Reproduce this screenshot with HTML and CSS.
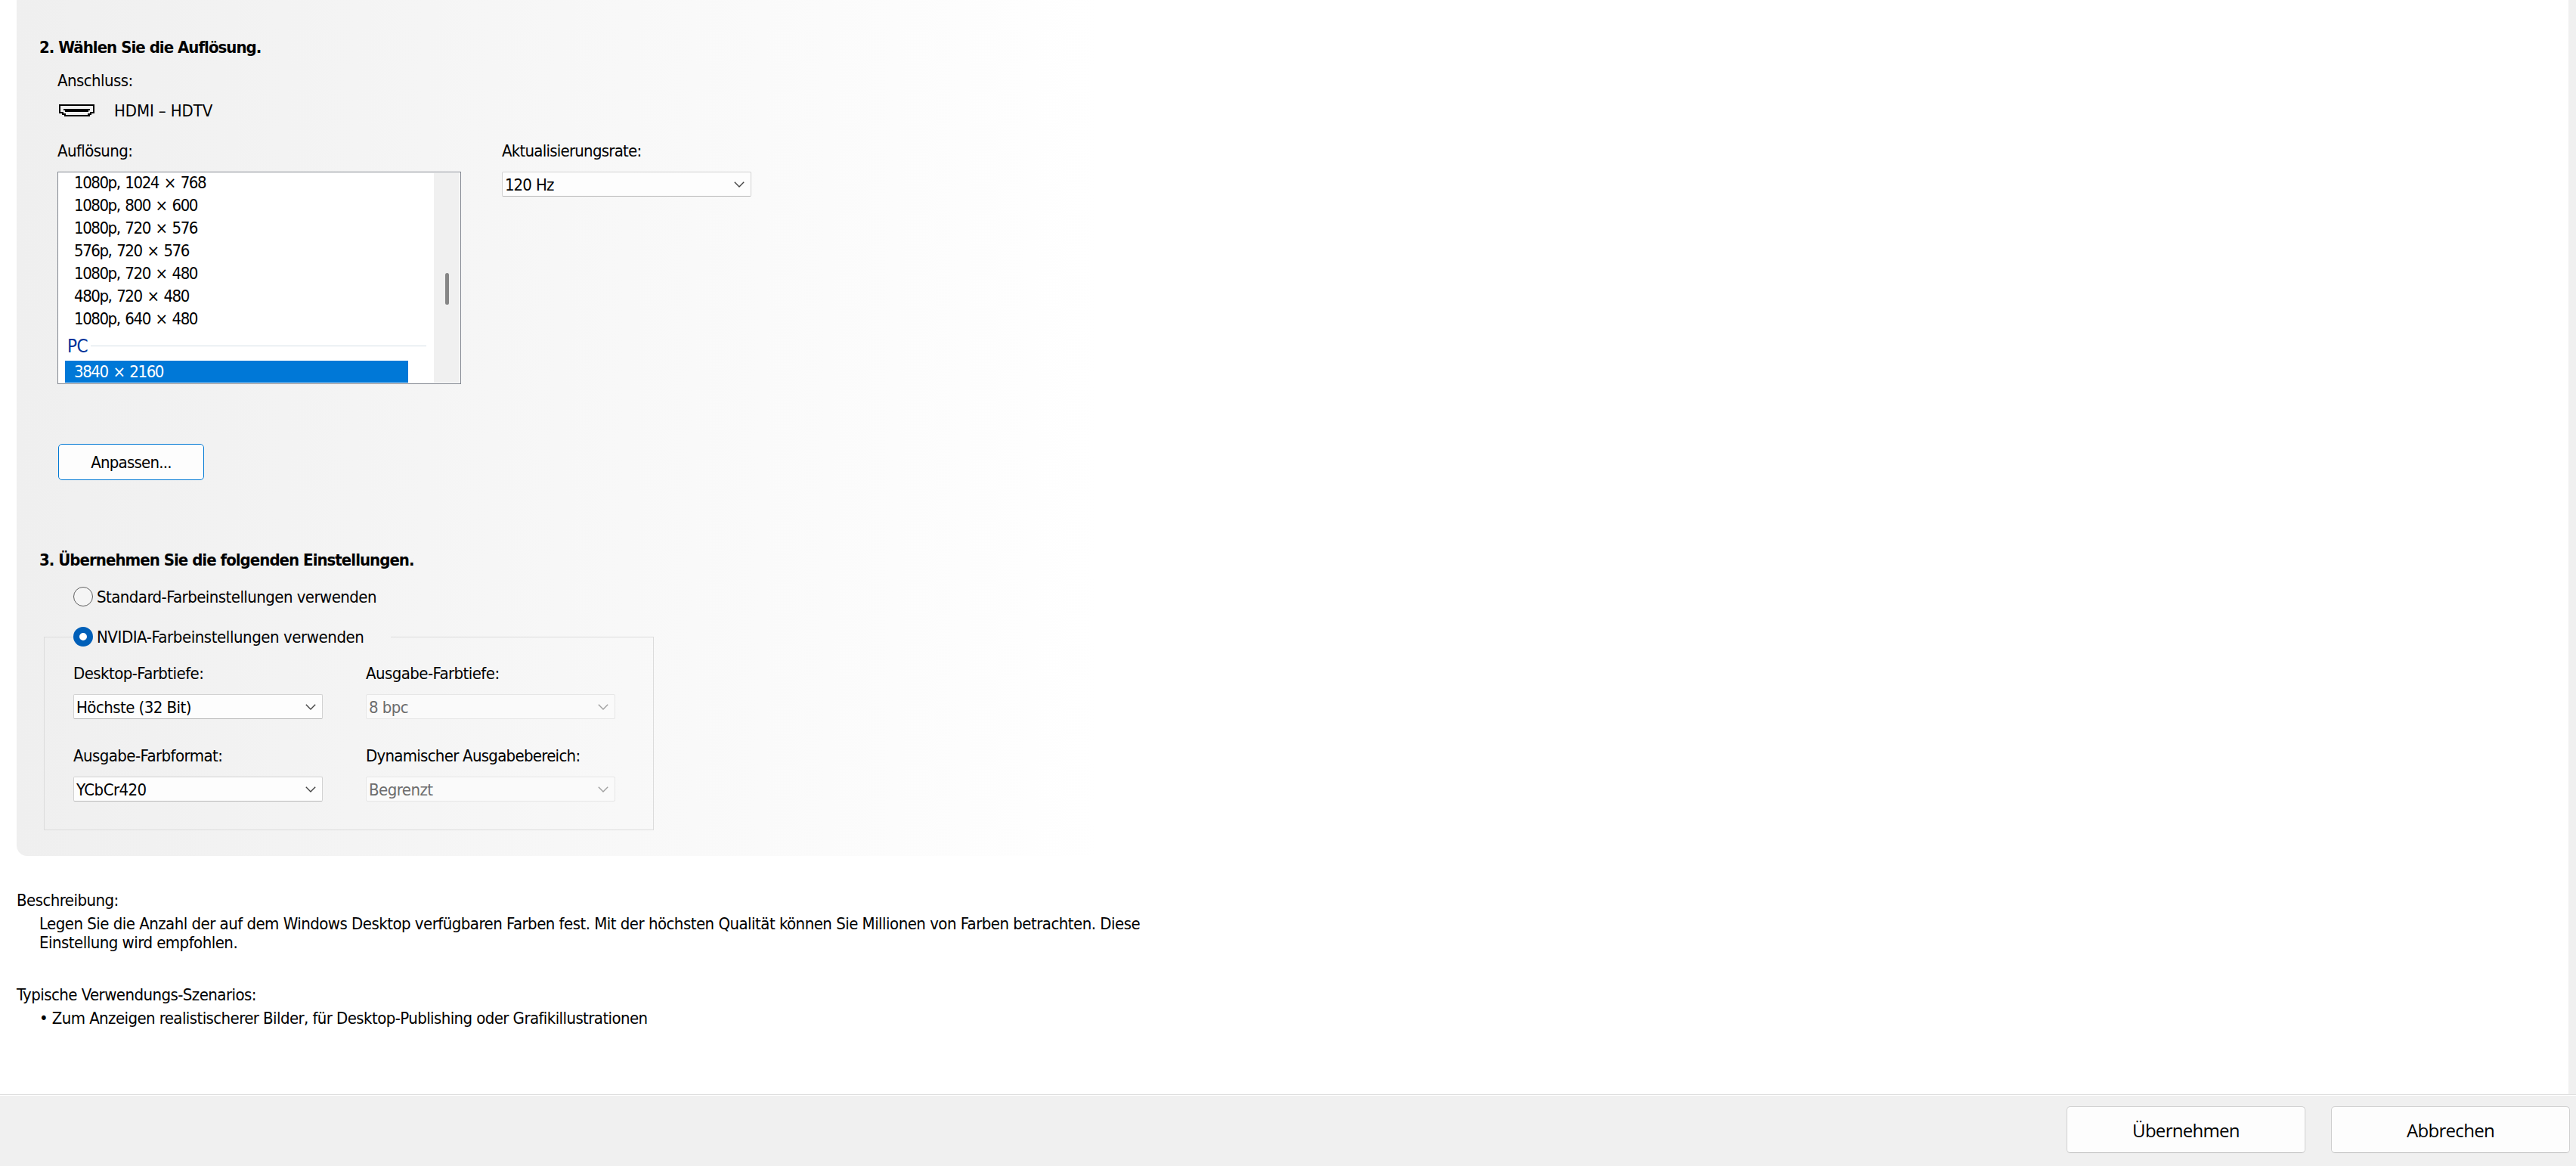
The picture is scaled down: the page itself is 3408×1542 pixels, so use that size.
FILE: index.html
```
<!DOCTYPE html>
<html lang="de">
<head>
    <meta charset="UTF-8">
    <meta name="viewport" content="width=device-width, initial-scale=1.0">
    <title>Auflösung ändern</title>
    <link rel="stylesheet" href="styles.css">
</head>
<body>

    <main class="content">
        <section class="panel">
            <h2 class="step">2. Wählen Sie die Auflösung.</h2>

            <div class="connector">
                <p>Anschluss:</p>
                <div class="connector-row">
                    <svg class="hdmi-icon" width="47" height="16" viewBox="0 0 47 16" shape-rendering="crispEdges">
                        <path d="M0 0h47v12h-4v2h-2v2H7v-2H4v-2H0zM2 2v8h4v2h3v2h29v-2h3v-2h4V2z" fill="#000" fill-rule="evenodd"/>
                        <path d="M6 6h35v2h-2v2H8V8H6z" fill="#000"/>
                    </svg>
                    <span>HDMI – HDTV</span>
                </div>
            </div>

            <div class="mode">
                <div class="resolution">
                    <p>Auflösung:</p>
                    <div class="listbox">
                        <ul class="modes">
                            <li>1080p, 1024 × 768</li>
                            <li>1080p, 800 × 600</li>
                            <li>1080p, 720 × 576</li>
                            <li>576p, 720 × 576</li>
                            <li>1080p, 720 × 480</li>
                            <li>480p, 720 × 480</li>
                            <li>1080p, 640 × 480</li>
                            <li class="group"><span>PC</span></li>
                            <li class="selected">3840 × 2160</li>
                        </ul>
                        <div class="scrollbar"><div class="thumb"></div></div>
                    </div>
                </div>
                <div class="refresh">
                    <p>Aktualisierungsrate:</p>
                    <div class="select"><span class="rate">120 Hz</span><svg class="chevron" width="14" height="8" viewBox="0 0 14 8"><path d="M.8.8 7 7 13.2.8"/></svg></div>
                </div>
            </div>

            <button class="btn customize">Anpassen...</button>

            <h2 class="step step-apply">3. Übernehmen Sie die folgenden Einstellungen.</h2>

            <label class="option"><i class="radio"></i><span>Standard-Farbeinstellungen verwenden</span></label>

            <fieldset class="colors">
                <legend class="option"><i class="radio checked"></i><span>NVIDIA-Farbeinstellungen verwenden</span></legend>
                <div class="field">
                    <p>Desktop-Farbtiefe:</p>
                    <div class="select"><span>Höchste (32 Bit)</span><svg class="chevron" width="14" height="8" viewBox="0 0 14 8"><path d="M.8.8 7 7 13.2.8"/></svg></div>
                </div>
                <div class="field">
                    <p>Ausgabe-Farbtiefe:</p>
                    <div class="select disabled"><span>8 bpc</span><svg class="chevron" width="14" height="8" viewBox="0 0 14 8"><path d="M.8.8 7 7 13.2.8"/></svg></div>
                </div>
                <div class="field">
                    <p>Ausgabe-Farbformat:</p>
                    <div class="select"><span>YCbCr420</span><svg class="chevron" width="14" height="8" viewBox="0 0 14 8"><path d="M.8.8 7 7 13.2.8"/></svg></div>
                </div>
                <div class="field">
                    <p class="range">Dynamischer Ausgabebereich:</p>
                    <div class="select disabled"><span>Begrenzt</span><svg class="chevron" width="14" height="8" viewBox="0 0 14 8"><path d="M.8.8 7 7 13.2.8"/></svg></div>
                </div>
            </fieldset>
        </section>

        <section class="help">
            <p>Beschreibung:</p>
            <p class="text">Legen Sie die Anzahl der auf dem Windows Desktop verfügbaren Farben fest. Mit der höchsten Qualität können Sie Millionen von Farben betrachten. Diese<br>Einstellung wird empfohlen.</p>
            <p class="scenarios">Typische Verwendungs-Szenarios:</p>
            <p class="bullet">• Zum Anzeigen realistischerer Bilder, für Desktop-Publishing oder Grafikillustrationen</p>
        </section>
    </main>

    <footer class="footer">
        <button class="btn">Übernehmen</button>
        <button class="btn">Abbrechen</button>
    </footer>

</body>
</html>
```
FILE: styles.css
```
* {
    box-sizing: border-box;
}

body {
    margin: 0;
    height: 1542px;
    display: flex;
    flex-direction: column;
    background: #fff;
    color: #000;
    font: 22px/26px "DejaVu Sans Condensed", "DejaVu Sans", Tahoma, sans-serif;
    font-stretch: condensed;
    letter-spacing: -0.55px;
    white-space: nowrap;
}

p, h2, ul {
    margin: 0;
    padding: 0;
}

.content {
    flex: 1;
    padding-left: 22px;
    border-right: 10px solid #f0f0f0;
}

.panel {
    width: 1450px;
    height: 1132px;
    padding: 50px 0 0 31px;
    border-bottom-left-radius: 14px;
    background: linear-gradient(to right, #efefef, #fff 1430px);
}

.step {
    margin-left: -1px;
    font-size: 22px;
    font-weight: bold;
    line-height: 26px;
    letter-spacing: -0.97px;
}

.connector,
.mode {
    padding-left: 23px;
}

.connector {
    margin-top: 18px;
}

.connector-row {
    display: flex;
    gap: 26px;
    margin-top: 14px;
    padding-left: 2px;
    letter-spacing: -0.1px;
}

.hdmi-icon {
    margin-top: 4px;
}

.mode {
    display: flex;
    gap: 54px;
    margin-top: 27px;
}

.mode p {
    letter-spacing: -0.75px;
}

.resolution p {
    letter-spacing: -0.6px;
}

.listbox {
    display: flex;
    justify-content: space-between;
    width: 534px;
    height: 281px;
    margin-top: 14px;
    padding: 1px 0 1px 9px;
    border: 1px solid #828790;
    background: #fff;
}

.modes {
    width: 478px;
    list-style: none;
    overflow: hidden;
    letter-spacing: -1.45px;
    word-spacing: 2px;
}

.modes li {
    width: 454px;
    height: 30px;
    padding-left: 12px;
    line-height: 30px;
}

.modes li:first-child {
    margin-top: -2px;
}

.modes .group {
    display: flex;
    align-items: center;
    gap: 4px;
    width: 478px;
    height: 40px;
    padding-left: 3px;
    color: #003399;
    font-size: 24px;
    letter-spacing: -0.4px;
}

.group span {
    padding-top: 2px;
}

.group::after {
    content: "";
    flex: 1;
    height: 1px;
    background: #d5dfe5;
}

.modes .selected {
    background: #0078d7;
    color: #fff;
}

.scrollbar {
    width: 34px;
    margin-right: 1px;
    padding: 132px 0 0 15px;
    background: #f0f0f0;
}

.thumb {
    width: 5px;
    height: 42px;
    border-radius: 3px;
    background: #868686;
}

.select {
    display: flex;
    justify-content: space-between;
    align-items: center;
    width: 330px;
    height: 33px;
    margin-top: 14px;
    padding: 0 8px 0 3px;
    border: 1px solid #d2d2d2;
    border-bottom-color: #b8b8b8;
    border-radius: 2px;
    background: #fdfdfd;
}

.select span {
    padding-top: 3px;
}

.select .rate {
    letter-spacing: -1px;
    word-spacing: 1px;
}

.chevron path {
    fill: none;
    stroke: #444;
    stroke-width: 1.4;
}

.select.disabled {
    border-color: #e6e6e6;
    background: #fafafa;
    color: #6d6d6d;
}

.disabled .chevron path {
    stroke: #a0a0a0;
}

.btn {
    padding: 0;
    border: 1px solid #d0d0d0;
    border-bottom-color: #b9b9b9;
    border-radius: 5px;
    background: #fdfdfd;
    color: #000;
    font: inherit;
    letter-spacing: inherit;
}

.customize {
    display: block;
    width: 193px;
    height: 48px;
    margin: 79px 0 0 24px;
    padding-top: 1px;
    border-color: #0078d4;
    letter-spacing: -0.75px;
}

.step-apply {
    margin-top: 93px;
}

.option {
    display: flex;
    align-items: center;
    gap: 5px;
    height: 26px;
    margin: 22px 0 0 44px;
}

.option span {
    padding-top: 2px;
}

.radio {
    width: 26px;
    height: 26px;
    border: 1px solid #5f5f5f;
    border-radius: 50%;
    background: #f5f5f5;
}

.radio.checked {
    border: 8px solid #005fb8;
    background: #fff;
}

.colors {
    display: grid;
    grid-template-columns: 330px 330px;
    align-content: start;
    gap: 36px 57px;
    width: 807px;
    height: 269px;
    margin: 27px 0 0 5px;
    padding: 23px 0 0 38px;
    border: 1px solid #dcdcdc;
}

.colors .option {
    width: 420px;
    margin: 0;
    padding: 0;
    letter-spacing: -0.43px;
}

.colors .range {
    letter-spacing: -0.72px;
}

.help {
    padding-top: 46px;
}

.help .text {
    margin-top: 5px;
    padding-left: 30px;
    line-height: 25px;
    letter-spacing: -0.52px;
}

.scenarios {
    margin-top: 44px;
}

.bullet {
    margin-top: 5px;
    padding-left: 30px;
    letter-spacing: -0.58px;
}

.footer {
    display: flex;
    justify-content: flex-end;
    gap: 34px;
    height: 95px;
    padding: 15px 8px 0 0;
    border-top: 1px solid #dfdfdf;
    background: #f0f0f0;
    box-shadow: inset 0 1px #fff;
    font: 24px "Open Sans", sans-serif;
    letter-spacing: -0.7px;
}

.footer .btn {
    width: 316px;
    height: 62px;
}
```
